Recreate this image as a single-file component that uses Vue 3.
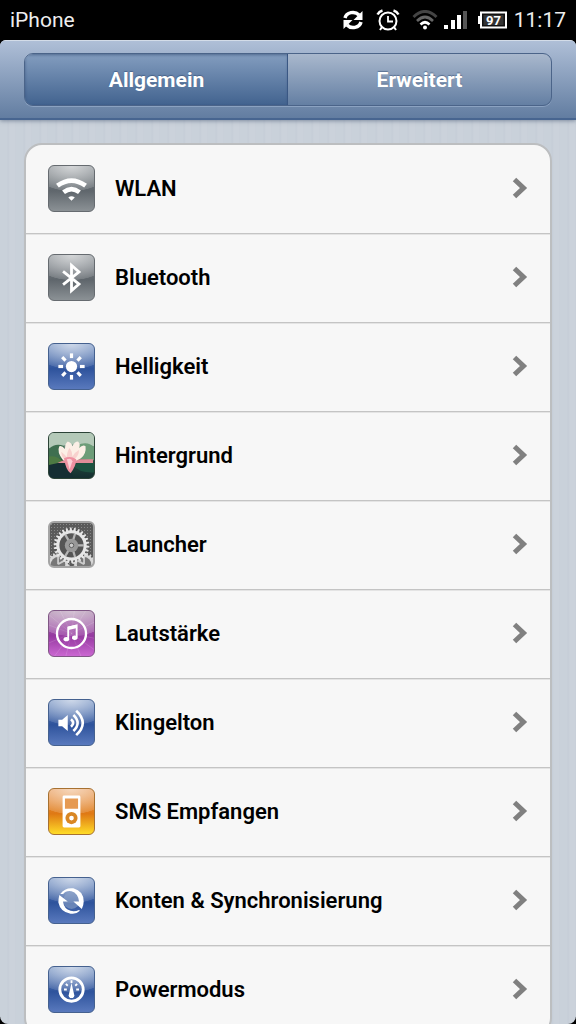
<script setup>
import { ref } from 'vue'

const activeTab = ref('general')

const tabs = [
  { id: 'general', title: 'Allgemein' },
  { id: 'advanced', title: 'Erweitert' }
]

const settings = [
  { id: 'wifi', title: 'WLAN', tone: 'gray' },
  { id: 'bluetooth', title: 'Bluetooth', tone: 'gray' },
  { id: 'brightness', title: 'Helligkeit', tone: 'blue' },
  { id: 'wallpaper', title: 'Hintergrund', tone: 'photo' },
  { id: 'launcher', title: 'Launcher', tone: 'mesh' },
  { id: 'volume', title: 'Lautstärke', tone: 'purple' },
  { id: 'ringtone', title: 'Klingelton', tone: 'blue' },
  { id: 'sms', title: 'SMS Empfangen', tone: 'orange' },
  { id: 'sync', title: 'Konten & Synchronisierung', tone: 'blue' },
  { id: 'power', title: 'Powermodus', tone: 'blue' }
]

const rays = [0, 45, 90, 135, 180, 225, 270, 315]

// Outline of a toothed wheel
function gearPath(cx, cy, outer, inner, teeth) {
  const step = (Math.PI * 2) / teeth
  const point = (r, a) => `${(cx + r * Math.cos(a)).toFixed(2)} ${(cy + r * Math.sin(a)).toFixed(2)}`
  let d = ''
  for (let i = 0; i < teeth; i++) {
    const a = i * step
    d += `${i ? 'L' : 'M'}${point(inner, a)}L${point(outer, a + step * 0.15)}`
    d += `L${point(outer, a + step * 0.5)}L${point(inner, a + step * 0.65)}`
  }
  return d + 'Z'
}

const bigGear = gearPath(24, 25, 20, 17, 26)
const leftGear = gearPath(9, 46, 13, 11, 18)
const rightGear = gearPath(38, 46, 13, 11, 18)
</script>

<template>
  <div class="phone">
    <header class="status-bar">
      <span class="carrier">iPhone</span>
      <div class="status-icons">
        <svg class="status-sync" viewBox="0 0 22 22" aria-hidden="true">
          <path d="M3 9A8 7 0 0 1 17 6" fill="none" stroke="#fff" stroke-width="3.5" />
          <path d="M20.500 2v9h-9z" fill="#fff" />
          <path d="M19 13A8 7 0 0 1 5 16" fill="none" stroke="#fff" stroke-width="3.500" />
          <path d="M1.500 20v-9h9z" fill="#fff" />
        </svg>
        <svg class="status-alarm" viewBox="0 0 24 22" aria-hidden="true">
          <g fill="none" stroke="#fff">
            <circle cx="12" cy="12" r="8.500" stroke-width="2" />
            <path d="M12 7v5.500h5" stroke-width="1.800" />
            <path d="M1.500 5.500Q3 2.500 6.500 1.500M17.500 1.500Q21 2.500 22.500 5.500" stroke-width="2.500" />
            <path d="M6 18l-2 3M18 18l2 3" stroke-width="2" />
          </g>
        </svg>
        <svg class="status-wifi" viewBox="0 0 26 20" aria-hidden="true">
          <path d="M1.500 7Q13-4 24.500 7" fill="none" stroke="#444" stroke-width="3" />
          <path d="M5 11Q13 3 21 11" fill="none" stroke="#666" stroke-width="2.600" />
          <path d="M8.500 14.500Q13 10 17.500 14.500" fill="none" stroke="#fff" stroke-width="2.600" />
          <circle cx="13" cy="17.500" r="2" fill="#fff" />
        </svg>
        <svg class="status-signal" viewBox="0 0 24 20" aria-hidden="true">
          <path d="M0 15h4v4H0zM7 10h4v9H7zM13 5h4v14h-4z" fill="#fff" />
          <path d="M19 1h4v18h-4z" fill="#555" />
        </svg>
        <svg class="status-battery" viewBox="0 0 30 18" aria-hidden="true">
          <path d="M0 5h3v8H0z" fill="#fff" />
          <rect x="3" y="1.500" width="25" height="15" fill="#111" stroke="#fff" stroke-width="2" />
          <rect x="5.500" y="4" width="20" height="10" fill="#333" />
          <text x="15.500" y="13.500" text-anchor="middle">97</text>
        </svg>
        <time>11:17</time>
      </div>
    </header>

    <div class="screen">
      <nav class="toolbar">
        <div class="segmented">
          <button
            v-for="tab in tabs"
            :key="tab.id"
            class="segment"
            :class="{ active: activeTab === tab.id }"
            type="button"
            @click="activeTab = tab.id"
          >
            {{ tab.title }}
          </button>
        </div>
      </nav>

      <main class="content">
        <ul class="settings-list">
          <li v-for="item in settings" :key="item.id">
            <a class="setting" :href="`#${item.id}`">
              <span class="tile" :class="item.tone">
                <svg viewBox="0 0 48 48" aria-hidden="true">
                  <g v-if="item.id === 'wifi'" fill="none" stroke="#fff">
                    <path d="M9 21Q24 10 39 21" stroke-width="5" />
                    <path d="M15.500 28Q24 21.500 32.500 28" stroke-width="5" />
                    <path d="M20.500 33.500Q24 31 27.500 33.500L24 37z" fill="#fff" stroke="none" />
                  </g>

                  <path
                    v-else-if="item.id === 'bluetooth'"
                    d="M15 17.500L32 31 24 38V11L32 18 15 31.500"
                    fill="none"
                    stroke="#fff"
                    stroke-width="3"
                  />

                  <g v-else-if="item.id === 'brightness'" fill="#fff">
                    <circle cx="24" cy="24" r="6" />
                    <rect
                      v-for="angle in rays"
                      :key="angle"
                      x="22.300"
                      y="10"
                      width="3.400"
                      height="5"
                      :transform="`rotate(${angle} 24 24)`"
                    />
                  </g>

                  <g v-else-if="item.id === 'wallpaper'">
                    <path d="M0 0h48v14Q31 9 0 16z" fill="#b4c9b8" />
                    <path d="M0 17Q7 10 16 14V28L0 26z" fill="#3f6f50" />
                    <path d="M30 13Q41 8 48 15v14L32 28z" fill="#6d9c78" />
                    <path d="M0 25q9-1 16 6L0 36z" fill="#4d7a43" />
                    <path d="M0 34l18-4 8 18H0z" fill="#152e33" />
                    <path d="M25 34q11-4 23-2v10q-15 1-23-8z" fill="#1c5240" />
                    <path d="M9 32l9-4h29v4H24z" fill="#e08d98" />
                    <path d="M15 29Q8 20 11 14q3-1 6 3 0-6 3-8 4 1 5 5 2-5 6-5 3 3 1 7 4-4 7-2 1 8-5 13-7 5-19 2z" fill="#fcefe6" />
                    <path d="M16 28q-3-4-3-8 4 3 6 6 0-6 3-10 3 4 3 9 3-5 7-7 0 6-5 10-5 2-11 0z" fill="#f6c9c8" opacity=".8" />
                    <path d="M16 27q7-3 13 1 0 7-6 15-5-3-7-16z" fill="#ee91a1" />
                    <path d="M19 28q5-2 6 2l-3 9z" fill="#fad0d5" />
                  </g>

                  <g v-else-if="item.id === 'launcher'">
                    <path :d="leftGear" fill="#d8d8d8" />
                    <path :d="rightGear" fill="#d8d8d8" />
                    <circle cx="9" cy="46" r="8" fill="#777" />
                    <circle cx="38" cy="46" r="8" fill="#777" />
                    <path d="M9 46V37M9 46l7-4M38 46v-9M38 46l-7-4" stroke="#ccc" stroke-width="2" />
                    <circle cx="24" cy="25" r="18" fill="#444" />
                    <path :d="bigGear" fill="#e6e6e6" />
                    <circle cx="24" cy="25" r="13.500" fill="#555" />
                    <path
                      d="M24 25h14M24 25l-7-12M24 25l-7 12M24 25l4-13M24 25l4 13"
                      stroke="#b5b5b5"
                      stroke-width="2.500"
                    />
                    <circle cx="24" cy="25" r="7.500" fill="#999" />
                    <circle cx="24" cy="25" r="2.500" fill="#ccc" stroke="#555" />
                  </g>

                  <g v-else-if="item.id === 'volume'" fill="none" stroke="#fff">
                    <path
                      class="beams"
                      d="M24 24L0 4M24 24L0 15M24 24L0 34M24 24L6 48M24 24L18 48M24 24L34 48M24 24L48 41M24 24L48 29M24 24L48 12M24 24L39 0M24 24L27 0M24 24L12 0"
                    />
                    <circle class="disc" cx="24" cy="24" r="15.500" stroke-width="2.500" />
                    <path d="M20.500 30V17.500l9-2V28" stroke-width="2" />
                    <path d="M20.500 18.500l9-2" stroke-width="3.500" />
                    <ellipse cx="18.500" cy="30" rx="3" ry="2.300" fill="#fff" stroke="none" />
                    <ellipse cx="27.500" cy="28.500" rx="3" ry="2.300" fill="#fff" stroke="none" />
                  </g>

                  <g v-else-if="item.id === 'ringtone'" fill="none" stroke="#fff">
                    <path d="M10 21h4l6-5v17l-6-5h-4z" fill="#fff" stroke="none" />
                    <path d="M23.500 20.500Q28 24.500 23.500 28.500" stroke-width="2.800" />
                    <path d="M26 16Q35 24.500 26 33" stroke-width="2.800" />
                    <path d="M29 11.500Q43 24.500 29 37.500" stroke-width="2.800" />
                  </g>

                  <g v-else-if="item.id === 'sms'">
                    <rect x="14.500" y="7" width="19" height="34" rx="1.500" fill="#fff" />
                    <path d="M17 10h14v11H17z" fill="#e69a52" />
                    <circle cx="24" cy="31" r="6.500" fill="#d98724" />
                    <circle cx="24" cy="31" r="2.500" fill="#fff" />
                  </g>

                  <g v-else-if="item.id === 'sync'">
                    <circle cx="24" cy="24" r="9" fill="#8da4c8" opacity=".6" />
                    <path d="M12 17Q17 10 26 11 37 14 37 25q0 4-2 8l-9-8h6Q31 16 24 14 18 13 15 17z" fill="#fff" />
                    <path d="M11 18l9 7h-5q1 8 8 10 5 1 9-1l1 1q-4 4-10 3Q12 36 10 26q0-4 1-8z" fill="#fff" />
                  </g>

                  <g v-else fill="none" stroke="#fff">
                    <circle cx="24" cy="24" r="12.500" stroke-width="3" />
                    <path d="M24 17l3 13q0 3-3 3t-3-3z" fill="#fff" stroke="none" />
                    <path d="M16 24h3M29 24h3M18 18l2 2M30 18l-2 2M24 14v3" stroke-width="2" />
                  </g>
                </svg>
              </span>
              <span class="title">{{ item.title }}</span>
              <svg class="chevron" viewBox="0 0 16 22" aria-hidden="true">
                <path d="M2.500 2.500L11.500 11 2.500 19.500" />
              </svg>
            </a>
          </li>
        </ul>
      </main>
    </div>
  </div>
</template>

<style>
body {
  margin: 0;
  background: #000;
}
</style>

<style scoped>
.phone {
  height: 100vh;
  display: flex;
  flex-direction: column;
  background: #000;
  font-family: Roboto, "Liberation Sans", sans-serif;
}

.status-bar {
  flex: none;
  height: 40px;
  padding: 0 10px;
  display: flex;
  align-items: center;
  justify-content: space-between;
  color: #eee;
  font-size: 21px;
}

.status-icons {
  display: flex;
  align-items: center;
  gap: 6px;
}

.status-icons svg {
  display: block;
}

.status-sync {
  width: 22px;
  height: 22px;
  margin-right: 6px;
}

.status-alarm {
  width: 24px;
  height: 22px;
  margin-right: 6px;
}

.status-wifi {
  width: 26px;
  height: 20px;
}

.status-signal {
  width: 24px;
  height: 20px;
  margin-right: 4px;
}

.status-battery {
  width: 30px;
  height: 18px;
}

.status-battery text {
  fill: #fff;
  font-size: 13px;
  font-weight: 700;
}

.screen {
  flex: 1;
  min-height: 0;
  display: flex;
  flex-direction: column;
  overflow: hidden;
  border-radius: 6px 6px 8px 8px;
  background: repeating-linear-gradient(
    90deg,
    #c9d1da 0,
    #c9d1da 7px,
    #c5cdd7 8px,
    #cbd2db 10px,
    #cbd2db 15px,
    #c7ced8 16px
  );
}

.toolbar {
  flex: none;
  padding: 12px 24px;
  border-top: 1px solid #d3dce8;
  border-bottom: 2px solid #476590;
  background: linear-gradient(#afbfd7, #627da1);
  box-shadow: 0 1px 4px rgba(50, 70, 100, 0.5);
}

.segmented {
  display: flex;
  height: 53px;
  box-sizing: border-box;
  overflow: hidden;
  border: 1px solid #4b6489;
  border-radius: 9px;
  background: linear-gradient(#a9b8cd, #647fa3);
  box-shadow: 0 1px 0 #8ba2c1;
}

.segment {
  flex: 1;
  border: 0;
  padding: 0;
  background: none;
  color: #fff;
  font-family: inherit;
  font-size: 21px;
  font-weight: 700;
  text-shadow: 0 -1px 1px rgba(40, 65, 105, 0.5);
  cursor: pointer;
}

.segment.active {
  background: linear-gradient(#839dbf, #42638f);
  box-shadow: inset 0 1px 3px rgba(45, 70, 110, 0.6), inset -1px 0 0 #3f5d8a;
}

.content {
  flex: 1;
  min-height: 0;
  padding: 23px 24px 16px;
  overflow-y: auto;
  scrollbar-width: none;
}

.settings-list {
  list-style: none;
  margin: 0;
  padding: 0;
  overflow: hidden;
  border: 2px solid #bcbec0;
  border-radius: 18px;
  background: #f7f7f7;
}

.settings-list li + li {
  border-top: 1px solid #c4c4c4;
  box-shadow: inset 0 1px 0 #e4e4e4;
}

.setting {
  height: 88px;
  box-sizing: border-box;
  padding: 0 22px 2px;
  display: flex;
  align-items: center;
  gap: 20px;
  color: #000;
  text-decoration: none;
}

.tile {
  flex: none;
  width: 47px;
  height: 47px;
  box-sizing: border-box;
  overflow: hidden;
  border: 1px solid #666b70;
  border-radius: 6px;
}

.tile svg {
  display: block;
  width: 100%;
  height: 100%;
}

.gray {
  background:
    radial-gradient(ellipse 90% 56% at 50% 0, rgba(255, 255, 255, 0.65), rgba(255, 255, 255, 0.15) 98%, transparent 100%),
    linear-gradient(#858b90, #5f666c 55%, #8b9195);
}

.blue {
  border-color: #45618f;
  background:
    radial-gradient(ellipse 90% 56% at 50% 0, rgba(255, 255, 255, 0.65), rgba(255, 255, 255, 0.12) 98%, transparent 100%),
    linear-gradient(#7190c1, #2e539c 55%, #5979bd);
}

.purple {
  border-color: #805785;
  background:
    radial-gradient(ellipse 90% 56% at 50% 0, rgba(255, 255, 255, 0.5), rgba(255, 255, 255, 0.2) 98%, transparent 100%),
    linear-gradient(#a783a7, #9639a1 55%, #ca67d1);
}

.orange {
  border-color: #a77131;
  background:
    radial-gradient(ellipse 90% 56% at 50% 0, rgba(255, 255, 255, 0.6), rgba(255, 255, 255, 0.15) 98%, transparent 100%),
    linear-gradient(#e99b59, #df7914 55%, #ffdc28);
}

.photo {
  border-color: #2c4337;
  background: linear-gradient(#b3c9ba, #234b3d 60%, #142e30);
}

.mesh {
  border: 2px solid #a5a5a5;
  background: radial-gradient(#888 1px, #5a5a5a 1px) 0 0 / 3px 3px;
}

.beams {
  opacity: 0.15;
}

.disc {
  fill: rgba(154, 65, 164, 0.3);
}

.title {
  flex: 1;
  font-size: 22px;
  font-weight: 600;
}

.chevron {
  flex: none;
  width: 16px;
  height: 22px;
}

.chevron path {
  fill: none;
  stroke: #808080;
  stroke-width: 5;
}
</style>
